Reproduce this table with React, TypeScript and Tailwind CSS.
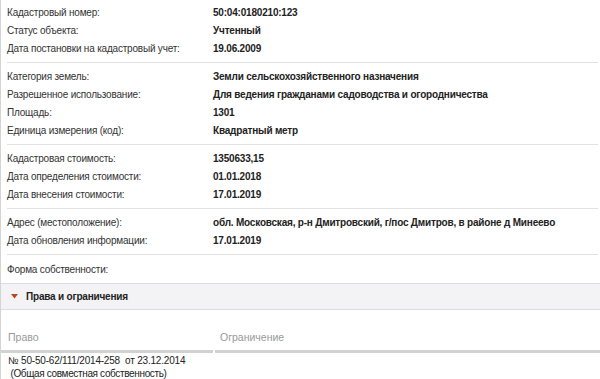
const groups: [string, string][][] = [
  [
    ["Кадастровый номер:", "50:04:0180210:123"],
    ["Статус объекта:", "Учтенный"],
    ["Дата постановки на кадастровый учет:", "19.06.2009"],
  ],
  [
    ["Категория земель:", "Земли сельскохозяйственного назначения"],
    ["Разрешенное использование:", "Для ведения гражданами садоводства и огородничества"],
    ["Площадь:", "1301"],
    ["Единица измерения (код):", "Квадратный метр"],
  ],
  [
    ["Кадастровая стоимость:", "1350633,15"],
    ["Дата определения стоимости:", "01.01.2018"],
    ["Дата внесения стоимости:", "17.01.2019"],
  ],
  [
    ["Адрес (местоположение):", "обл. Московская, р-н Дмитровский, г/пос Дмитров, в районе д Минеево"],
    ["Дата обновления информации:", "17.01.2019"],
  ],
]

function Row({ label, value }: { label: string; value: string }) {
  return (
    <div className="flex h-[18px] items-center">
      <div className="w-[206px] shrink-0 text-[#333]">{label}</div>
      <div className="font-bold text-[#222]">{value}</div>
    </div>
  )
}

export default function App() {
  return (
    <div
      className="w-[600px] h-[379px] overflow-hidden bg-white border-l border-[#d4d4d4] text-[10px] tracking-[-0.2px]"
      style={{ fontFamily: '"Liberation Sans", Arial, sans-serif' }}
    >
      <div className="pl-[6px] pr-[2px] pt-[3px]">
        {groups.map((g, i) => (
          <div key={i} className={`${i === 0 ? "" : "pt-[4px]"} pb-[5px] border-b border-[#e2e2e2]`}>
            {g.map(([l, v]) => (
              <Row key={l} label={l} value={v} />
            ))}
          </div>
        ))}
        <div className="flex h-[18px] items-center mt-[5px] text-[#333]">Форма собственности:</div>
      </div>

      <div className="mt-[5px] h-[27px] flex items-center border-y border-[#dcdcdc] bg-[#f3f2f4] pl-[10px]">
        <svg width="7" height="5" viewBox="0 0 7 5" className="mr-[8px]">
          <path d="M0 0 L7 0 L3.5 4.5 Z" fill="#b8452a" />
        </svg>
        <span className="font-bold text-[#222]">Права и ограничения</span>
      </div>

      <div className="flex mt-[20px] text-[10.5px] tracking-normal">
        <div className="w-[212px] border-b-[3px] border-[#d2d2d2] pl-[7px] pb-[4px] text-[#999]">Право</div>
        <div className="ml-[2px] flex-1 border-b-[3px] border-[#d2d2d2] pl-[5px] pb-[4px] text-[#999]">Ограничение</div>
      </div>
      <div className="border-b border-[#e2e2e2] pl-[7px] pt-[1px] pb-[1px] leading-[13px] text-[#222] whitespace-pre">
        <div>{"№ 50-50-62/111/2014-258  от 23.12.2014"}</div>
        <div className="tracking-[-0.35px]">{" (Общая совместная собственность)"}</div>
      </div>
    </div>
  )
}
